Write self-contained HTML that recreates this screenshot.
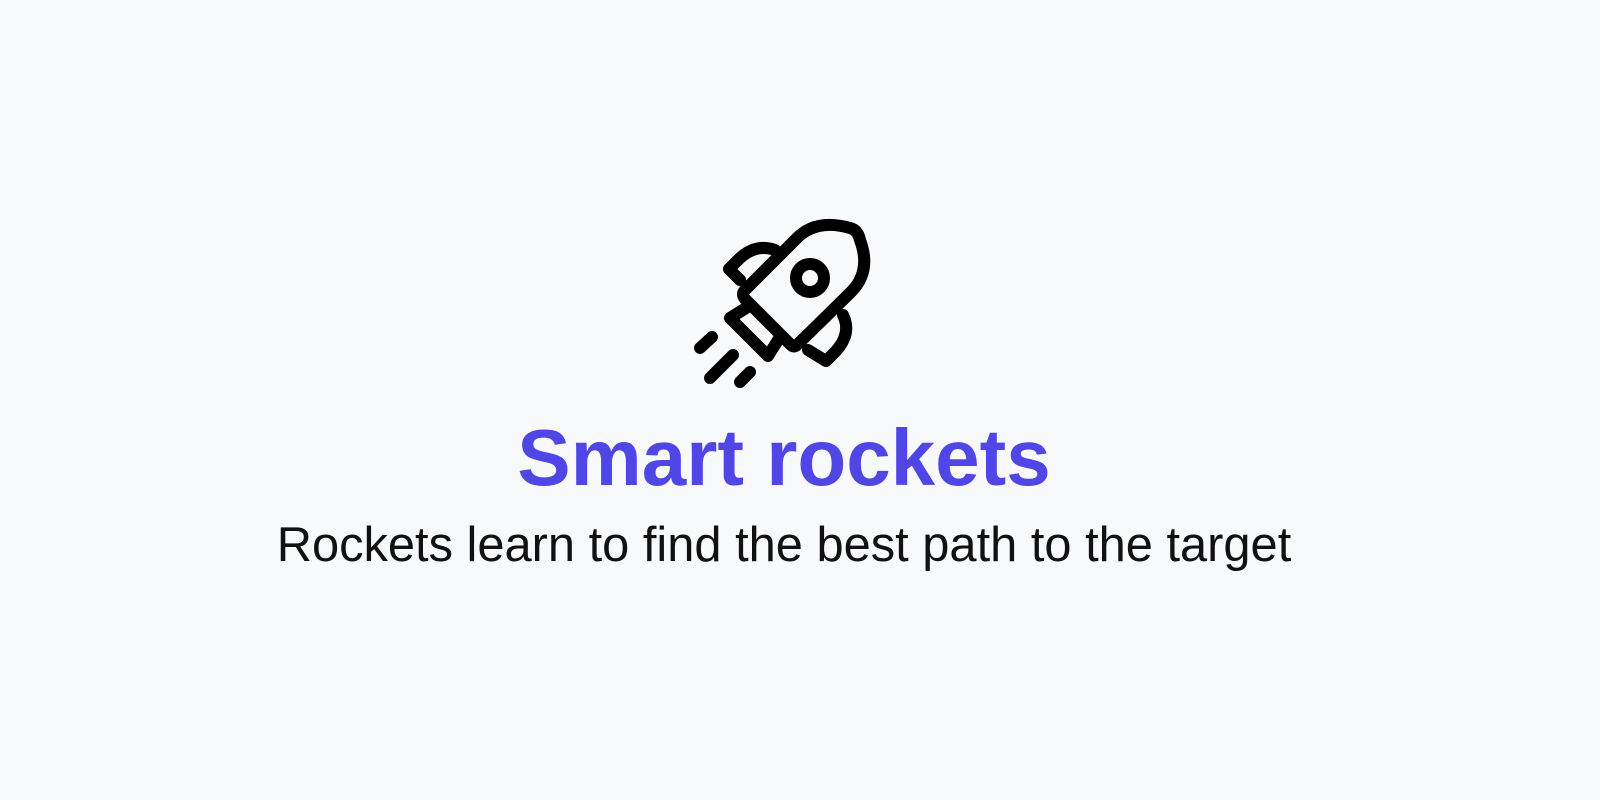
<!DOCTYPE html>
<html><head><style>
html,body{margin:0;width:1600px;height:800px;background:#f8f9fb;overflow:hidden}
svg{position:absolute;left:0;top:0}
.t{position:absolute;left:0;width:1568px;text-align:center;font-family:"Liberation Sans",sans-serif;white-space:nowrap}
#h{top:408px;font-size:80px;font-weight:bold;color:#4f46e5;line-height:100px}
#s{top:515px;font-size:48.8px;color:#111;line-height:60px}
</style></head><body>
<svg width="1600" height="800" fill="none" stroke="#000" stroke-width="12" stroke-linecap="round" stroke-linejoin="round">
<path d="M745 290 L795 240 Q815 218 850 228 Q858 230 860 240 Q872 272 850 293 L797 345 Q794 348 791 345 L745 299 Q741 294 745 290 Z"/>
<circle cx="810" cy="278" r="14"/>
<path d="M740 280 L729 269 L738 260 Q755 243 775 250"/>
<path d="M808 350 L826 361 L836 351 Q852 333 843 315"/>
<path d="M746 308 L730 318 L768 356 L778 340"/>
<path d="M700 348 L712 337 M710 378 L733 355 M740 382 L750 372"/>
</svg>
<div class="t" id="h">Smart rockets</div>
<div class="t" id="s">Rockets learn to find the best path to the target</div>
</body></html>
